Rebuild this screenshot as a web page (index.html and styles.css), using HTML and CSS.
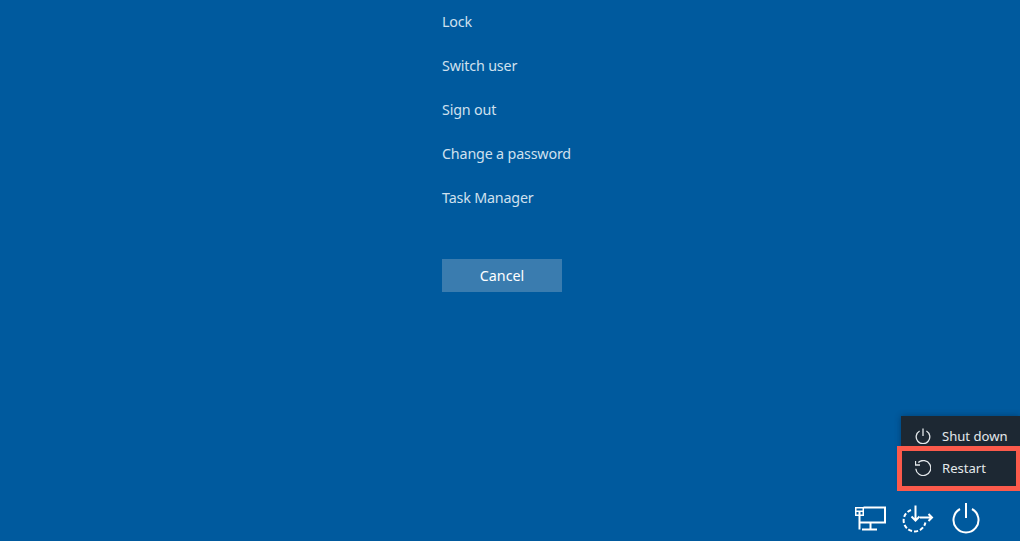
FILE: index.html
```html
<!DOCTYPE html>
<html lang="en">
<head>
<meta charset="utf-8">
<title>Security options</title>
<link rel="stylesheet" href="styles.css">
</head>
<body>
<main class="options">
  <ul class="option-list">
    <li class="option">Lock</li>
    <li class="option">Switch user</li>
    <li class="option">Sign out</li>
    <li class="option">Change a password</li>
    <li class="option">Task Manager</li>
  </ul>
  <button class="cancel">Cancel</button>
</main>
<div class="power-menu">
  <div class="power-item">
    <svg class="menu-icon" viewBox="0 0 16 16"><path d="M4.600 3A6.800 6.800 0 1 0 11.400 3M8 .5V8"/></svg>
    <span>Shut down</span>
  </div>
  <div class="power-item selected">
    <svg class="menu-icon" viewBox="0 0 16 16"><path d="M3.300 2.400A7.500 7.500 0 1 1 .8 8.700M.5 1V5H5"/></svg>
    <span>Restart</span>
  </div>
</div>
<footer class="tray">
  <svg class="tray-icon network" viewBox="0 0 32 26"><path d="M9.500 2.500H31V17.500H5.500M5.500 11V24.500M8 24.500H23M16.500 17.500V24.500"/><path class="solid" d="M1 2h9v9H1zM2.500 3.500v2h6v-2zM2.500 7v2.500h2V7zM6.500 7v2.500h2V7z"/></svg>
  <svg class="tray-icon update" viewBox="0 0 32 29"><path class="dash" d="M9 6A11 11 0 1 0 23.400 18.500"/><path d="M13.500 1.500V16M9.500 12.500l4 4 4-4M18 13.500H30M26.500 10l3.500 3.500-3.500 3.500"/></svg>
  <svg class="tray-icon power" viewBox="0 0 28 32"><path d="M8 7A12.500 12.500 0 1 0 20 7M14 1V16"/></svg>
</footer>
</body>
</html>
```
FILE: styles.css
```css
* {
  box-sizing: border-box;
}

html,
body {
  height: 100%;
  margin: 0;
}

body {
  position: relative;
  height: 541px;
  overflow: hidden;
  background: #005a9e;
  color: #fff;
  font-family: "Noto Sans", "Open Sans", sans-serif;
  display: flex;
  flex-direction: column;
  justify-content: space-between;
}

.options {
  padding-left: 442px;
}

.option-list {
  list-style: none;
  margin: 0;
  padding: 0;
}

.option {
  height: 44px;
  line-height: 43px;
  font-size: 14.3px;
  letter-spacing: -.17px;
  color: #cfe0ee;
}

.cancel {
  display: block;
  width: 120px;
  height: 33px;
  margin-top: 39px;
  border: 0;
  padding: 0;
  background: #3a7caf;
  color: #fff;
  font: 14.3px "Noto Sans", "Open Sans", sans-serif;
}

.power-menu {
  position: absolute;
  right: 0;
  top: 416px;
  width: 119px;
  background: #1d2833;
  box-shadow: 0 0 6px rgba(0, 30, 60, .45);
}

.power-item {
  position: relative;
  height: 35px;
  padding: 5px 0 0 14px;
  display: flex;
  align-items: center;
  gap: 11px;
  font-size: 13.1px;
  color: #e4e8eb;
}

.power-item.selected {
  padding: 0 0 1px 14px;
}

.power-item.selected::after {
  content: "";
  position: absolute;
  left: -4px;
  right: 0;
  top: -5px;
  bottom: -5px;
  border: solid #fb5a4b;
  border-width: 5px 4px 5px 5px;
}

.menu-icon {
  width: 16px;
  height: 16px;
  fill: none;
  stroke: #e4e8eb;
  stroke-width: 1.300;
}

.tray {
  display: flex;
  align-items: center;
  justify-content: flex-end;
  gap: 16px;
  padding: 0 40px 7px 0;
}

.tray-icon {
  fill: none;
  stroke: #fff;
  stroke-width: 2;
}

.network {
  width: 32px;
  height: 26px;
}

.update {
  width: 32px;
  height: 29px;
}

.power {
  width: 28px;
  height: 32px;
  margin-left: 2px;
}

.tray-icon .solid {
  fill: #fff;
  fill-rule: evenodd;
  stroke: none;
}

.tray-icon .dash {
  stroke-dasharray: 4 2;
}
```
